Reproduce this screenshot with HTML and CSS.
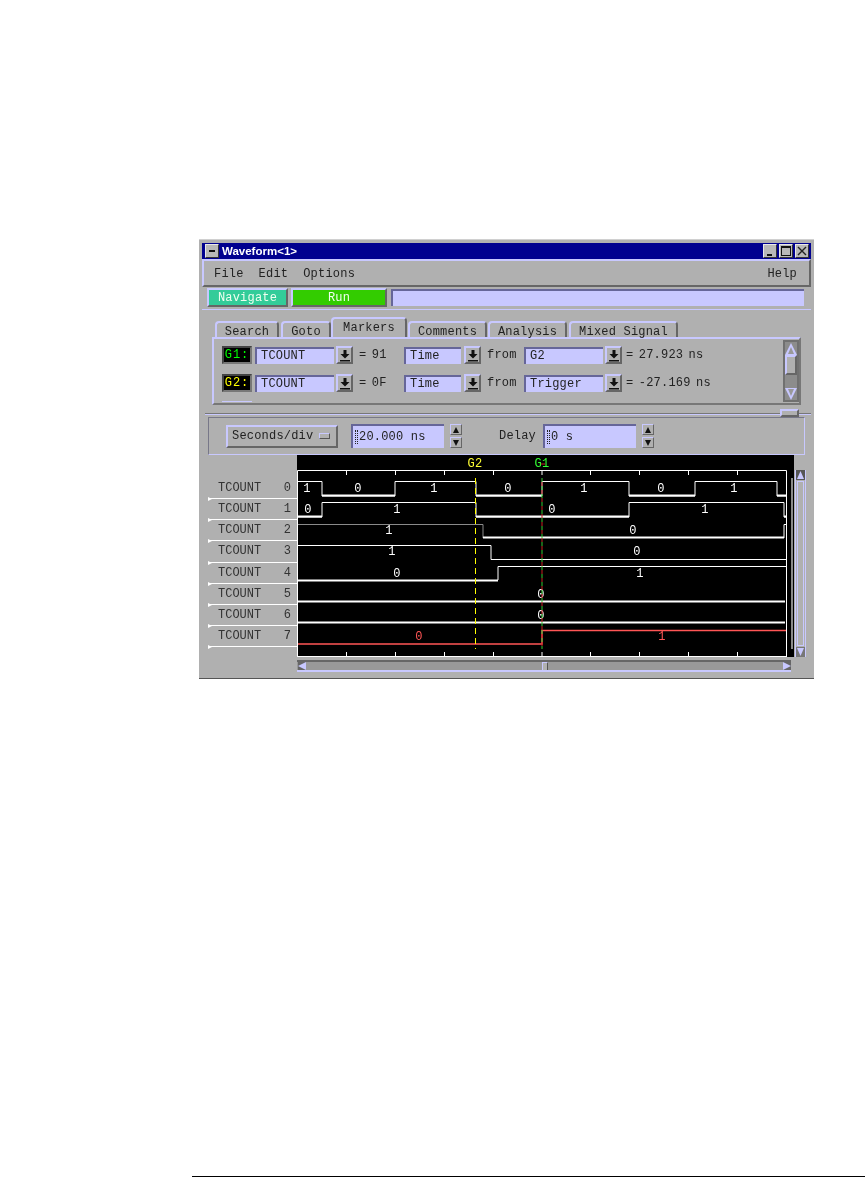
FILE: index.html
```html
<!DOCTYPE html>
<html>
   <head>
      <meta charset="utf-8">
      <title>Waveform&lt;1&gt;</title>
      <link rel="stylesheet" href="styles.css">
   </head>
   <body>
      <div class="page">
         <div class="window">
            <div class="titlebar">
               <div class="wm-btn wm-menu"><span class="wm-dash"></span></div>
               <div class="title-text">Waveform&lt;1&gt;</div>
               <div class="wm-btn wm-first"><span class="wm-min"></span></div>
               <div class="wm-btn"><span class="wm-max"></span></div>
               <div class="wm-btn">
                  <svg width="10" height="10" viewBox="0 0 10 10"><path d="M1 1L9 9M9 1L1 9" stroke="#222" stroke-width="1.4"/></svg>
               </div>
            </div>
            <div class="menubar">
               <span class="menu-item">File</span>
               <span class="menu-item">Edit</span>
               <span class="menu-item">Options</span>
               <span class="menu-item menu-help">Help</span>
            </div>
            <div class="toolbar">
               <div class="tool-btn tool-nav">Navigate</div>
               <div class="tool-btn tool-run">Run</div>
               <div class="tool-status"></div>
            </div>
            <div class="tabs">
               <div class="tab tab-search">Search</div>
               <div class="tab tab-goto">Goto</div>
               <div class="tab tab-active">Markers</div>
               <div class="tab tab-comments">Comments</div>
               <div class="tab tab-analysis">Analysis</div>
               <div class="tab tab-mixed">Mixed Signal</div>
            </div>
            <div class="panel">
               <div class="rows">
                  <div class="row">
                     <div class="marker marker-g1">G1:</div>
                     <div class="field field-name">TCOUNT</div>
                     <div class="drop drop-name"><svg width="12" height="13" viewBox="0 0 12 13"><path d="M4.5 1H7.5V5H10.5L6 9.5L1.5 5H4.5ZM1 11H11V12.500H1Z" fill="#111"/></svg></div>
                     <div class="val val-eq">= 91</div>
                     <div class="field field-time">Time</div>
                     <div class="drop drop-time"><svg width="12" height="13" viewBox="0 0 12 13"><path d="M4.5 1H7.5V5H10.5L6 9.5L1.5 5H4.5ZM1 11H11V12.500H1Z" fill="#111"/></svg></div>
                     <div class="val val-from">from</div>
                     <div class="field field-name">G2</div>
                     <div class="drop drop-name"><svg width="12" height="13" viewBox="0 0 12 13"><path d="M4.5 1H7.5V5H10.5L6 9.5L1.5 5H4.5ZM1 11H11V12.500H1Z" fill="#111"/></svg></div>
                     <div class="val val-read">= 27.923 ns</div>
                  </div>
                  <div class="row">
                     <div class="marker marker-g2">G2:</div>
                     <div class="field field-name">TCOUNT</div>
                     <div class="drop drop-name"><svg width="12" height="13" viewBox="0 0 12 13"><path d="M4.5 1H7.5V5H10.5L6 9.5L1.5 5H4.5ZM1 11H11V12.500H1Z" fill="#111"/></svg></div>
                     <div class="val val-eq">= 0F</div>
                     <div class="field field-time">Time</div>
                     <div class="drop drop-time"><svg width="12" height="13" viewBox="0 0 12 13"><path d="M4.5 1H7.5V5H10.5L6 9.5L1.5 5H4.5ZM1 11H11V12.500H1Z" fill="#111"/></svg></div>
                     <div class="val val-from">from</div>
                     <div class="field field-name">Trigger</div>
                     <div class="drop drop-name"><svg width="12" height="13" viewBox="0 0 12 13"><path d="M4.5 1H7.5V5H10.5L6 9.5L1.5 5H4.5ZM1 11H11V12.500H1Z" fill="#111"/></svg></div>
                     <div class="val val-read">= -27.169 ns</div>
                  </div>
                  <div class="row-end"></div>
               </div>
               <div class="vscroll">
                  <svg class="arrow-box" width="12" height="12" viewBox="0 0 12 12"><path d="M6 0L12 12H0Z" fill="#c8c8ff"/><path d="M6 4L9 11H3Z" fill="#999"/></svg>
                  <div class="vthumb"></div>
                  <svg class="arrow-box arrow-end" width="12" height="12" viewBox="0 0 12 12"><path d="M6 12L12 0H0Z" fill="#c8c8ff"/><path d="M6 8L9 1H3Z" fill="#999"/></svg>
               </div>
            </div>
            <div class="sash"><div class="sash-handle"></div></div>
            <div class="timebase">
               <div class="option">Seconds/div<span class="option-mark"></span></div>
               <div class="field field-sec"><span class="caret"></span>20.000 ns</div>
               <div class="spin">
                  <div class="spin-btn"><svg width="6" height="6" viewBox="0 0 8 8"><path d="M4 0L8 8H0Z" fill="#111"/></svg></div>
                  <div class="spin-btn"><svg width="6" height="6" viewBox="0 0 8 8"><path d="M0 0H8L4 8Z" fill="#111"/></svg></div>
               </div>
               <div class="delay-label">Delay</div>
               <div class="field field-sec field-delay"><span class="caret"></span>0 s</div>
               <div class="spin">
                  <div class="spin-btn"><svg width="6" height="6" viewBox="0 0 8 8"><path d="M4 0L8 8H0Z" fill="#111"/></svg></div>
                  <div class="spin-btn"><svg width="6" height="6" viewBox="0 0 8 8"><path d="M0 0H8L4 8Z" fill="#111"/></svg></div>
               </div>
            </div>
            <div class="scope">
               <div class="labels">
                  <div class="label"><span>TCOUNT</span><span>0</span></div>
                  <div class="label"><span>TCOUNT</span><span>1</span></div>
                  <div class="label"><span>TCOUNT</span><span>2</span></div>
                  <div class="label"><span>TCOUNT</span><span>3</span></div>
                  <div class="label"><span>TCOUNT</span><span>4</span></div>
                  <div class="label"><span>TCOUNT</span><span>5</span></div>
                  <div class="label"><span>TCOUNT</span><span>6</span></div>
                  <div class="label"><span>TCOUNT</span><span>7</span></div>
               </div>
               <svg class="trace" width="497" height="202" viewBox="0 0 497 202">
                  <rect width="497" height="202" fill="#000"/>
                  <rect x="494" y="23" width="2" height="171" fill="#8A8A8A"/>
                  <path class="frame" d="M0.500 202V15.500H489.500V202M0 201.500H490"/>
                  <path class="frame" d="M49.500 15V20M98.500 15V20M147.500 15V20M196.500 15V20M245 15V20M293.500 15V20M342.500 15V20M391.500 15V20M440.500 15V20M49.500 197V201M98.500 197V201M147.500 197V201M196.500 197V201M245 197V201M293.500 197V201M342.500 197V201M391.500 197V201M440.500 197V201"/>

                  <path class="wave" d="M1 26.500H25V41H98V26.500H179V41H245V26.500H332V41H398V26.500H480V41H489"/>
                  <path class="low" d="M25 40.500H98M179 40.500H245M332 40.500H398M480 40.500H489"/>
                  <path class="wave" d="M1 62H25V47.500H179V62H332V47.500H487V62H489"/>
                  <path class="low" d="M1 61.500H25M179 61.500H332M487 61.500H489"/>
                  <path class="wave-dim" d="M1 69.500H186V83"/>
                  <path class="low" d="M186 82.500H487"/>
                  <path class="wave" d="M487 83V69.500H489"/>
                  <path class="wave" d="M1 90.500H194V104.500H489"/>
                  <path class="low" d="M1 125.500H201"/>
                  <path class="wave" d="M201 125V111.500H489"/>
                  <path class="low" d="M1 146.500H488M1 167.500H488"/>
                  <path class="wave-red" d="M1 189H245V175.500H489"/>

                  <g class="digits">
                     <text x="10" y="37">1</text><text x="61" y="37">0</text><text x="137" y="37">1</text><text x="211" y="37">0</text><text x="287" y="37">1</text><text x="364" y="37">0</text><text x="437" y="37">1</text>
                     <text x="11" y="58">0</text><text x="100" y="58">1</text><text x="255" y="58">0</text><text x="408" y="58">1</text>
                     <text x="92" y="79">1</text><text x="336" y="79">0</text>
                     <text x="95" y="100">1</text><text x="340" y="100">0</text>
                     <text x="100" y="122">0</text><text x="343" y="122">1</text>
                     <text x="244" y="143">0</text>
                     <text x="244" y="164">0</text>
                  </g>
                  <g class="digits digits-red">
                     <text x="122" y="185">0</text><text x="365" y="185">1</text>
                  </g>

                  <text class="tag tag-g2" x="178" y="12">G2</text>
                  <text class="tag tag-g1" x="245" y="12">G1</text>
                  <path class="cursor-g2" d="M178.500 23V194"/>
                  <path class="cursor-g1" d="M245 23V194"/>
                  <path class="cursor-g1b" d="M245 23V194"/>
                  <path class="cursor-g1b" d="M240 9H250"/>
               </svg>
               <div class="wave-scroll">
                  <svg class="wave-arrow" width="9" height="10" viewBox="0 0 9 10"><path d="M0 0H9V10H0Z" fill="#555"/><path d="M4.500 1L8 9H1Z" fill="#c8c8ff"/></svg>
                  <div class="wave-track"></div>
                  <svg class="wave-arrow" width="9" height="10" viewBox="0 0 9 10"><path d="M0 0H9V10H0Z" fill="#777"/><path d="M4.500 9L8 1H1Z" fill="#c8c8ff"/></svg>
               </div>
            </div>
            <div class="hscroll">
               <svg class="hs-arrow" width="8" height="8" viewBox="0 0 8 8"><path d="M0 0H8V8H0Z" fill="#666"/><path d="M0 4L8 0V8Z" fill="#c8c8ff"/></svg>
               <div class="hs-thumb"></div>
               <svg class="hs-arrow" width="8" height="8" viewBox="0 0 8 8"><path d="M0 0H8V8H0Z" fill="#666"/><path d="M8 4L0 0V8Z" fill="#c8c8ff"/></svg>
            </div>
            <svg class="window-end" width="615" height="2" viewBox="0 0 615 2">
               <path d="M234 1.500h3M246 1.500h2M255 1.500h2M258 1.500h2M300 1.500h2M315 1.500h2M322 1.500h2M337 1.500h2" stroke="#000" stroke-width="1"/>
            </svg>
         </div>
         <div class="footer-rule"></div>
      </div>
   </body>
</html>
```

FILE: styles.css
```css
body{
margin: 0;
background-color: #FFFFFF;
font-family: "Liberation Mono", monospace;
font-size: 12px;
letter-spacing: 0.2px;
color: #222222;
}
.page{
box-sizing: border-box;
height: 1177px;
padding-top: 239px;
display: flex;
flex-direction: column;
overflow: hidden;
will-change: transform;
}
.window{
box-sizing: border-box;
width: 615px;
height: 440px;
margin-left: 199px;
padding: 3px 3px 0 3px;
border-top: 1px solid #d0d0d0;
background-color: #B0B0B0;
overflow: hidden;
}
.window-end{
display: block;
margin: 6px 0 0 -3px;
background-color: #555555;
}
.footer-rule{
height: 1px;
margin-top: auto;
margin-left: 192px;
background-color: #000000;
}

/* title bar */
.titlebar{
height: 16px;
display: flex;
align-items: center;
padding: 0 2px 0 3px;
background-color: #00008F;
}
.title-text{
flex: 1;
margin-left: 3px;
font-family: "Liberation Sans", sans-serif;
font-size: 11.5px;
font-weight: bold;
letter-spacing: 0;
color: #FFFFFF;
}
.wm-btn{
box-sizing: border-box;
width: 14px;
height: 14px;
margin-left: 2px;
display: flex;
align-items: center;
justify-content: center;
background-color: #B8B8B8;
border: 1px solid;
border-color: #E8E8E8 #333333 #333333 #E8E8E8;
}
.wm-menu{
margin-left: 0;
}
.wm-dash{
width: 6px;
height: 2px;
background-color: #111111;
}
.wm-min{
width: 5px;
height: 2px;
margin-top: 7px;
margin-right: 2px;
background-color: #111111;
}
.wm-max{
box-sizing: border-box;
width: 10px;
height: 10px;
border: 1px solid #111111;
border-top-width: 2px;
}

/* menu */
.menubar{
box-sizing: border-box;
height: 28px;
display: flex;
align-items: center;
padding: 2px 12px 0 10px;
border: 2px solid;
border-color: #C8C8FF #666666 #666666 #C8C8FF;
}
.menu-item{
margin-right: 15px;
}
.menu-help{
margin-left: auto;
margin-right: 0;
}

/* toolbar */
.toolbar{
box-sizing: border-box;
height: 23px;
display: flex;
align-items: center;
padding: 0 7px 1px 5px;
border-bottom: 1px solid #C8C8FF;
}
.tool-btn{
box-sizing: border-box;
height: 19px;
line-height: 17px;
text-align: center;
color: #F0FFF0;
border: 2px solid;
border-color: #C8C8FF #666666 #666666 #C8C8FF;
}
.tool-nav{
width: 81px;
background-color: #33CC99;
}
.tool-run{
width: 96px;
margin-left: 3px;
background-color: #33CC00;
}
.tool-status{
box-sizing: border-box;
flex: 1;
height: 17px;
margin-left: 4px;
background-color: #C8C8FF;
border-top: 2px solid #666699;
border-left: 2px solid #666699;
}

/* tabs */
.tabs{
height: 27px;
padding-left: 13px;
display: flex;
align-items: flex-end;
}
.tab{
box-sizing: border-box;
height: 16px;
margin-right: 2px;
text-align: center;
line-height: 18px;
border: 2px solid;
border-color: #C8C8FF #666666 transparent #C8C8FF;
border-bottom: 0;
border-radius: 4px 4px 0 0;
}
.tab-search{
width: 64px;
}
.tab-goto{
width: 50px;
margin-right: 0;
}
.tab-active{
width: 76px;
height: 20px;
margin-right: 1px;
line-height: 19px;
}
.tab-comments{
width: 79px;
margin-right: 1px;
}
.tab-analysis{
width: 79px;
}
.tab-mixed{
width: 109px;
}
.panel{
box-sizing: border-box;
width: 589px;
height: 68px;
margin-left: 10px;
padding-top: 1px;
display: flex;
border: 2px solid;
border-color: #C8C8FF #777777 #777777 #C8C8FF;
}
.rows{
flex: 1;
padding: 6px 0 0 8px;
}
.row{
height: 18px;
margin-bottom: 10px;
display: flex;
align-items: center;
word-spacing: -2px;
}
.row + .row{
margin-bottom: 9px;
}
.row-end{
width: 30px;
height: 1px;
background-color: #C8C8FF;
}
.marker{
box-sizing: border-box;
width: 30px;
height: 18px;
margin-right: 3px;
line-height: 15px;
text-align: center;
letter-spacing: 1px;
background-color: #000000;
border: 2px solid;
border-color: #444444 #777777 #777777 #444444;
}
.marker-g1{
color: #00FF00;
}
.marker-g2{
color: #FFFF00;
}
.field{
box-sizing: border-box;
height: 17px;
padding-left: 4px;
line-height: 15px;
background-color: #C8C8FF;
border-top: 2px solid #666699;
border-left: 2px solid #666699;
white-space: nowrap;
}
.field-name{
width: 79px;
}
.field-time{
width: 57px;
}
.drop{
box-sizing: border-box;
width: 17px;
height: 18px;
display: flex;
align-items: center;
justify-content: center;
border: 2px solid;
border-color: #C8C8FF #666666 #666666 #C8C8FF;
}
.drop-name{
margin-left: 2px;
}
.drop-time{
margin-left: 3px;
}
.val{
box-sizing: border-box;
white-space: nowrap;
}
.val-eq{
width: 51px;
padding-left: 6px;
}
.val-from{
width: 43px;
padding-left: 6px;
}
.val-read{
padding-left: 4px;
}
.vscroll{
box-sizing: border-box;
width: 16px;
height: 62px;
padding-top: 1px;
display: flex;
flex-direction: column;
align-items: center;
background-color: #8C8C8C;
border: 2px solid #707070;
}
.arrow-box{
flex: none;
}
.vthumb{
box-sizing: border-box;
width: 12px;
height: 20px;
background-color: #B0B0B0;
border: 2px solid;
border-color: #C8C8FF #666666 #666666 #C8C8FF;
}
.arrow-end{
margin-top: auto;
}

/* sash */
.sash{
box-sizing: border-box;
position: relative;
height: 12px;
padding: 8px 0 0 3px;
}
.sash::before{
content: "";
display: block;
height: 1px;
background-color: #777777;
border-bottom: 1px solid #C8C8FF;
}
.sash-handle{
box-sizing: border-box;
position: absolute;
left: 578px;
top: 4px;
width: 19px;
height: 8px;
background-color: #B0B0B0;
border: 2px solid;
border-color: #C8C8FF #666666 #666666 #C8C8FF;
}

/* time base */
.timebase{
box-sizing: border-box;
width: 597px;
height: 38px;
margin: 0 0 0 6px;
padding-left: 17px;
display: flex;
align-items: center;
border: 1px solid;
border-color: #777788 #C8C8FF #C8C8FF #777788;
}
.option{
box-sizing: border-box;
width: 112px;
height: 23px;
padding-left: 4px;
margin-right: 13px;
display: flex;
align-items: center;
border: 2px solid;
border-color: #C8C8FF #666666 #666666 #C8C8FF;
}
.option-mark{
box-sizing: border-box;
width: 11px;
height: 6px;
margin-left: 6px;
border: 1px solid;
border-color: #C8C8FF #555555 #555555 #C8C8FF;
}
.field-sec{
width: 93px;
height: 24px;
padding-left: 2px;
line-height: 22px;
display: flex;
align-items: center;
}
.caret{
box-sizing: border-box;
width: 3px;
height: 14px;
margin-right: 1px;
border-left: 1px dotted #222222;
border-right: 1px dotted #222222;
}
.spin{
margin-left: 6px;
margin-right: 37px;
display: flex;
flex-direction: column;
gap: 2px;
}
.spin:last-child{
margin-right: 0;
}
.spin-btn{
box-sizing: border-box;
width: 12px;
height: 11px;
display: flex;
align-items: center;
justify-content: center;
border: 1px solid;
border-color: #C8C8FF #666666 #666666 #C8C8FF;
}
.delay-label{
width: 44px;
}

/* waveform */
.scope{
display: flex;
height: 202px;
}
.labels{
box-sizing: border-box;
width: 89px;
margin-left: 6px;
padding-top: 23px;
}
.label{
box-sizing: border-box;
position: relative;
height: 21.14px;
padding: 0 6px 0 10px;
display: flex;
justify-content: space-between;
line-height: 20px;
letter-spacing: 0;
color: #333333;
border-bottom: 1px solid #FFFFFF;
}
.label::after{
content: "";
position: absolute;
left: 0;
bottom: -3px;
border-left: 4px solid #FFFFFF;
border-top: 2.5px solid transparent;
border-bottom: 2.5px solid transparent;
}
.trace{
display: block;
flex: none;
}
.frame{
fill: none;
stroke: #FFFFFF;
stroke-width: 1;
}
.wave{
fill: none;
stroke: #FFFFFF;
stroke-width: 1;
}
.low{
fill: none;
stroke: #FFFFFF;
stroke-width: 2;
}
.wave-dim{
fill: none;
stroke: #8A8A8A;
stroke-width: 1;
}
.wave-red{
fill: none;
stroke: #FF5555;
stroke-width: 1.5;
}
.digits text{
font-family: "Liberation Mono", monospace;
font-size: 12px;
text-anchor: middle;
fill: #FFFFFF;
}
.digits-red text{
fill: #FF5555;
}
.tag{
font-family: "Liberation Mono", monospace;
font-size: 12px;
text-anchor: middle;
}
.tag-g2{
fill: #FFFF33;
}
.tag-g1{
fill: #33FF33;
}
.cursor-g2{
stroke: #FFFF00;
stroke-width: 1;
stroke-dasharray: 6 4;
}
.cursor-g1{
stroke: #33CC33;
stroke-width: 1;
stroke-dasharray: 4 4;
}
.cursor-g1b{
stroke: #CC2222;
stroke-width: 1;
stroke-dasharray: 4 4;
stroke-dashoffset: 4;
}
.wave-scroll{
box-sizing: border-box;
width: 11px;
height: 187px;
margin-top: 15px;
margin-left: 1px;
display: flex;
flex-direction: column;
border-left: 1px solid #C8C8FF;
border-right: 1px solid #C8C8FF;
}
.wave-arrow{
flex: none;
}
.wave-track{
flex: 1;
margin: 1px;
background-color: #B0B0B0;
border: 1px solid #C8C8FF;
}

/* horizontal scroller under the trace */
.hscroll{
box-sizing: border-box;
width: 494px;
height: 12px;
margin: 3px 0 0 95px;
padding-left: 1px;
display: flex;
align-items: center;
background-color: #999999;
border-top: 2px solid #666666;
border-bottom: 2px solid #C8C8FF;
}
.hs-thumb{
box-sizing: border-box;
width: 6px;
height: 8px;
margin-left: 236px;
margin-right: auto;
background-color: #B0B0B0;
border-top: 1px solid #C8C8FF;
border-left: 1px solid #C8C8FF;
border-right: 1px solid #555555;
}
```
